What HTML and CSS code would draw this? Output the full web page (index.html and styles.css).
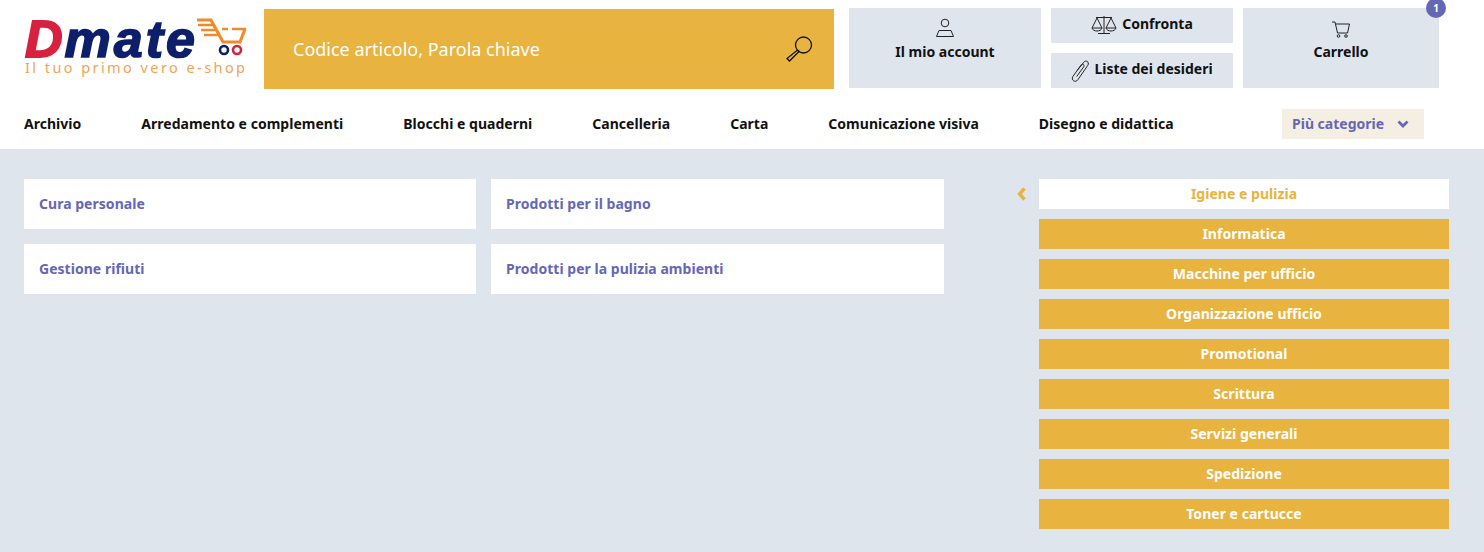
FILE: index.html
```html
<!DOCTYPE html>
<html lang="it">
<head>
<meta charset="utf-8">
<title>Dmate</title>
<link rel="stylesheet" href="styles.css">
</head>
<body>
<header class="top">
  <a class="logo">
    <span class="logo-main"><span class="logo-d">D</span><span class="logo-mate">mate</span>
      <svg class="logo-cart" width="52" height="40" viewBox="0 0 52 40" fill="none">
        <path d="M1 2H15L27 24H44L49 11" stroke="#f08a2c" stroke-width="3.200"/>
        <path d="M26 11H32M36 11H50" stroke="#f08a2c" stroke-width="2.600"/>
        <path d="M2 7H17M5 12H20M8 17H23" stroke="#f08a2c" stroke-width="2.400"/>
        <circle cx="28" cy="32" r="4" stroke="#0d1f6b" stroke-width="2.600"/>
        <circle cx="41" cy="32" r="4" stroke="#d7213f" stroke-width="2.600"/>
      </svg>
    </span>
    <span class="logo-tag">Il tuo primo vero e-shop</span>
  </a>
  <div class="search">
    <span class="search-text">Codice articolo, Parola chiave</span>
    <svg class="search-icon" width="28" height="28" viewBox="0 0 28 28" fill="none" stroke="#111" stroke-width="1.300">
      <circle cx="18.500" cy="10" r="8"/>
      <path d="M12.500 15L14 16.500L4.500 26L2 23.500Z"/>
    </svg>
  </div>
  <a class="tile account">
    <svg width="20" height="20" viewBox="0 0 20 20" fill="none" stroke="#222" stroke-width="1">
      <circle cx="10" cy="5" r="3.800"/>
      <path d="M4 12.500H16L18.500 18.500H1.500Z"/>
    </svg>
    <span>Il mio account</span>
  </a>
  <div class="tile-col">
    <a class="tile small">
      <svg class="scales" width="26" height="20" viewBox="0 0 26 20" fill="none" stroke="#222" stroke-width="1">
        <path d="M13 1V18.500M7 18.500H19M5 2.500H21"/>
        <path d="M6 3L1 13H11Z M1 13C2 17 10 17 11 13"/>
        <path d="M20 3L15 13H25Z M15 13C16 17 24 17 25 13"/>
      </svg>
      <span>Confronta</span>
    </a>
    <a class="tile small">
      <svg width="18" height="22" viewBox="0.500 0.500 16 20" fill="none" stroke="#222" stroke-width="0.900">
        <path d="M6 10L12 2.500C14 0 17.500 2.500 15.500 5.500L6.500 18.500C4.500 21.500 0 19 2 15.500L9.500 5C10.500 3.500 13 5 12 6.500L5.500 15.500"/>
      </svg>
      <span>Liste dei desideri</span>
    </a>
  </div>
  <a class="tile cart">
    <svg width="20" height="18" viewBox="0 0 20 18" fill="none" stroke="#222" stroke-width="1">
      <path d="M1 1H4L6.500 12H16.500L18.500 3H4.500" />
      <circle cx="7.500" cy="15" r="1.300"/>
      <circle cx="15" cy="15" r="1.300"/>
    </svg>
    <span>Carrello</span>
    <b class="badge">1</b>
  </a>
</header>
<nav class="nav">
  <a>Archivio</a>
  <a>Arredamento e complementi</a>
  <a>Blocchi e quaderni</a>
  <a>Cancelleria</a>
  <a>Carta</a>
  <a>Comunicazione visiva</a>
  <a>Disegno e didattica</a>
  <button class="more">Più categorie
    <svg width="12" height="8" viewBox="0 0 12 8" fill="none" stroke="#6567b5" stroke-width="2.800"><path d="M1.500 1.500L6 6L10.500 1.500"/></svg>
  </button>
</nav>
<main class="content">
  <section class="cards">
    <a class="card">Cura personale</a>
    <a class="card">Prodotti per il bagno</a>
    <a class="card">Gestione rifiuti</a>
    <a class="card">Prodotti per la pulizia ambienti</a>
  </section>
  <aside class="side">
    <svg class="back" width="11" height="14" viewBox="0 0 11 14" fill="none" stroke="#e8b33e" stroke-width="3.400"><path d="M8.500 1.500L3.500 7L8.500 12.500"/></svg>
    <ul class="cats">
      <li class="active">Igiene e pulizia</li>
      <li>Informatica</li>
      <li>Macchine per ufficio</li>
      <li>Organizzazione ufficio</li>
      <li>Promotional</li>
      <li>Scrittura</li>
      <li>Servizi generali</li>
      <li>Spedizione</li>
      <li>Toner e cartucce</li>
    </ul>
  </aside>
</main>
</body>
</html>
```
FILE: styles.css
```css
* { box-sizing: border-box; }
html, body { margin: 0; padding: 0; }
body {
  background: #fff;
  font-family: "Noto Sans", "Open Sans", sans-serif;
  font-size: 14px;
  font-weight: 700;
  line-height: 18px;
  color: #111;
  height: 552px;
  overflow: hidden;
}
.top {
  display: flex;
  align-items: flex-start;
  height: 100px;
  padding: 8px 0 0 24px;
}
.logo {
  width: 240px;
  flex: none;
  display: flex;
  flex-direction: column;
  padding-top: 9px;
}
.logo-main {
  display: flex;
  align-items: flex-start;
  height: 44px;
  padding-left: 1px;
  font-family: "Liberation Sans", sans-serif;
  font-style: italic;
  font-weight: 700;
  font-size: 52px;
  line-height: 44px;
}
.logo-d { color: #d7213f; -webkit-text-stroke: 2px #d7213f; }
.logo-mate { color: #0d1f6b; -webkit-text-stroke: 1.600px #0d1f6b; letter-spacing: 3px; margin-left: 2px; }
.logo-cart { margin: 1px 0 0 -2px; flex: none; }
.logo-tag {
  font-size: 14.500px;
  font-weight: 400;
  color: #f0a35a;
  letter-spacing: 2.430px;
  margin: -2px 0 0 1px;
  white-space: nowrap;
  line-height: 16px;
}
.search {
  width: 570px;
  height: 80px;
  margin-top: 1px;
  flex: none;
  background: #e8b33e;
  display: flex;
  align-items: center;
  justify-content: space-between;
  padding: 0 21px 0 29px;
  color: #fff;
  font-size: 18px;
  font-weight: 400;
}
.tile {
  background: #dfe5ed;
  display: flex;
  align-items: center;
  justify-content: center;
  position: relative;
  white-space: nowrap;
}
.account, .cart {
  flex-direction: column;
  height: 80px;
  justify-content: flex-start;
  padding-top: 10px;
  gap: 5px;
}
.account { width: 192px; margin-left: 15px; }
.cart { width: 196px; margin-left: 10px; padding-top: 13px; gap: 4px; }
.tile-col {
  width: 182px;
  margin-left: 10px;
  display: flex;
  flex-direction: column;
  gap: 10px;
}
.small { height: 35px; gap: 5px; }
.small span { margin-top: -4px; }
.scales { margin-top: -2px; }
.badge {
  position: absolute;
  top: -10px;
  right: -7px;
  width: 20px;
  height: 20px;
  border-radius: 50%;
  background: #6567b5;
  color: #fff;
  font-size: 10px;
  font-weight: 700;
  display: flex;
  align-items: center;
  justify-content: center;
}
.nav {
  display: flex;
  align-items: center;
  height: 49px;
  padding: 0 60px 2px 24px;
  gap: 60px;
  letter-spacing: 0.020px;
}
.more {
  margin-left: auto;
  width: 142px;
  height: 30px;
  border: 0;
  background: #f5efe3;
  color: #6567b5;
  font: inherit;
  display: flex;
  align-items: center;
  gap: 13px;
  padding: 0 0 0 10px;
}
.content {
  background: #dfe5ed;
  height: 403px;
  padding: 30px 35px 0 24px;
  display: flex;
  justify-content: space-between;
  letter-spacing: 0.030px;
}
.cards {
  width: 920px;
  display: grid;
  grid-template-columns: 452px 453px;
  grid-auto-rows: 50px;
  column-gap: 15px;
  row-gap: 15px;
  align-content: start;
}
.card {
  background: #fff;
  color: #6567b5;
  display: flex;
  align-items: center;
  padding-left: 15px;
}
.side { display: flex; align-items: flex-start; gap: 12px; }
.back { margin-top: 8px; }
.cats {
  list-style: none;
  margin: 0;
  padding: 0;
  width: 410px;
  display: flex;
  flex-direction: column;
  gap: 10px;
}
.cats li {
  height: 30px;
  background: #e8b33e;
  color: #fff;
  display: flex;
  align-items: center;
  justify-content: center;
}
.cats .active { background: #fff; color: #e8b33e; }
```
